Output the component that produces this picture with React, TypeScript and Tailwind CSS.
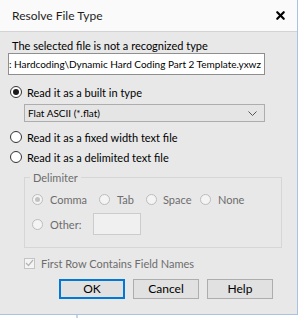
import { FiX } from "react-icons/fi";

const font = "font-['Lato',sans-serif]";

const Radio = ({ checked = false, disabled = false }: { checked?: boolean; disabled?: boolean }) => (
    <span
        className={`flex items-center justify-center shrink-0 rounded-full border ${disabled ? "w-[11px] h-[11px] border-[#bcbcbc] bg-[#f4f4f4]" : "w-[12px] h-[12px] border-[#333] bg-white"}`}
    >
        {checked && <span className={`rounded-full ${disabled ? "w-[5px] h-[5px] bg-[#c2c2c2]" : "w-[6px] h-[6px] bg-[#1a1a1a]"}`} />}
    </span>
);

const App = () => {
    return (
        <div className={`w-[300px] h-[318px] bg-white ${font} text-[11px] text-black leading-none`}>
            <div className="w-[298px] h-[315px] bg-[#e8e8e8] border-r border-b border-[#a9c2e3] flex flex-col">
                <div className="h-[32px] shrink-0 bg-[#fafafa] border-b border-[#d3d3d3] flex items-center justify-between pl-[12px] pr-[10px]">
                    <span className="text-[12px] text-[#1e1e1e]">Resolve File Type</span>
                    <FiX className="text-[13px] stroke-[4] text-black" />
                </div>

                <div className="h-[16px] mt-[5px] ml-[12px] flex items-center">The selected file is not a recognized type</div>
                <div className="ml-[8px] w-[257px] h-[22px] bg-white border border-[#8f8f8f] flex items-center justify-end overflow-hidden whitespace-nowrap pr-[3px]">
                    <span className="text-[10px]">C:\Weekly Challenge: Hardcoding\Dynamic Hard Coding Part 2 Template.yxwz</span>
                </div>

                <label className="h-[16px] mt-[9px] ml-[10px] flex items-center gap-[5px]">
                    <Radio checked />
                    <span>Read it as a built in type</span>
                </label>
                <div className="ml-[24px] w-[241px] h-[18px] mt-[4px] bg-[#e5e5e5] border border-[#adadad] flex items-center justify-between pl-[3px] pr-[7px]">
                    <span className="text-[10px]">Flat ASCII (*.flat)</span>
                    <svg width="9" height="5" viewBox="0 0 9 5" fill="none" stroke="#555" strokeWidth="1">
                        <path d="M0.5 0.5 L4.5 4.5 L8.5 0.5" />
                    </svg>
                </div>
                <label className="h-[16px] mt-[7px] ml-[10px] flex items-center gap-[5px]">
                    <Radio />
                    <span>Read it as a fixed width text file</span>
                </label>
                <label className="h-[16px] mt-[4px] ml-[10px] flex items-center gap-[5px]">
                    <Radio />
                    <span>Read it as a delimited text file</span>
                </label>

                <div className="relative ml-[24px] w-[258px] h-[71px] mt-[12px] border border-[#d6d6d6] text-[#6d6d6d] pl-[7px] pt-[13px]">
                    <span className="absolute -top-[7px] left-[5px] px-[3px] bg-[#e8e8e8] leading-[14px]">Delimiter</span>
                    <div className="h-[16px] flex items-center">
                        <label className="w-[67px] flex items-center gap-[7px]"><Radio checked disabled /><span>Comma</span></label>
                        <label className="w-[47px] flex items-center gap-[7px]"><Radio disabled /><span>Tab</span></label>
                        <label className="w-[54px] flex items-center gap-[6px]"><Radio disabled /><span>Space</span></label>
                        <label className="flex items-center gap-[7px]"><Radio disabled /><span>None</span></label>
                    </div>
                    <div className="h-[22px] mt-[6px] flex items-center">
                        <label className="w-[61px] flex items-center gap-[7px]"><Radio disabled /><span>Other:</span></label>
                        <div className="w-[48px] h-[22px] bg-[#f0f0f0] border border-[#cccccc]" />
                    </div>
                </div>

                <label className="h-[14px] mt-[8px] ml-[24px] flex items-center gap-[6px] text-[#6d6d6d]">
                    <span className="w-[11px] h-[11px] border border-[#c4c4c4] bg-[#f4f4f4] flex items-center justify-center">
                        <svg width="9" height="8" viewBox="0 0 9 8" fill="none" stroke="#b5b5b5" strokeWidth="1.2">
                            <path d="M1 4 L3.5 6.5 L8 1" />
                        </svg>
                    </span>
                    <span>First Row Contains Field Names</span>
                </label>

                <div className="mt-[9px] ml-[59px] flex gap-[8px]">
                    <button className="w-[66px] h-[20px] bg-[#e1e1e1] border-2 border-[#0078d7] text-[12px]">OK</button>
                    <button className="w-[66px] h-[20px] bg-[#e1e1e1] border border-[#adadad] text-[12px]">Cancel</button>
                    <button className="w-[66px] h-[20px] bg-[#e1e1e1] border border-[#adadad] text-[12px]">Help</button>
                </div>
            </div>
            <div className="ml-[76px] w-[2px] h-[3px] bg-[#c5d5ea]" />
        </div>
    );
};

export default App;
